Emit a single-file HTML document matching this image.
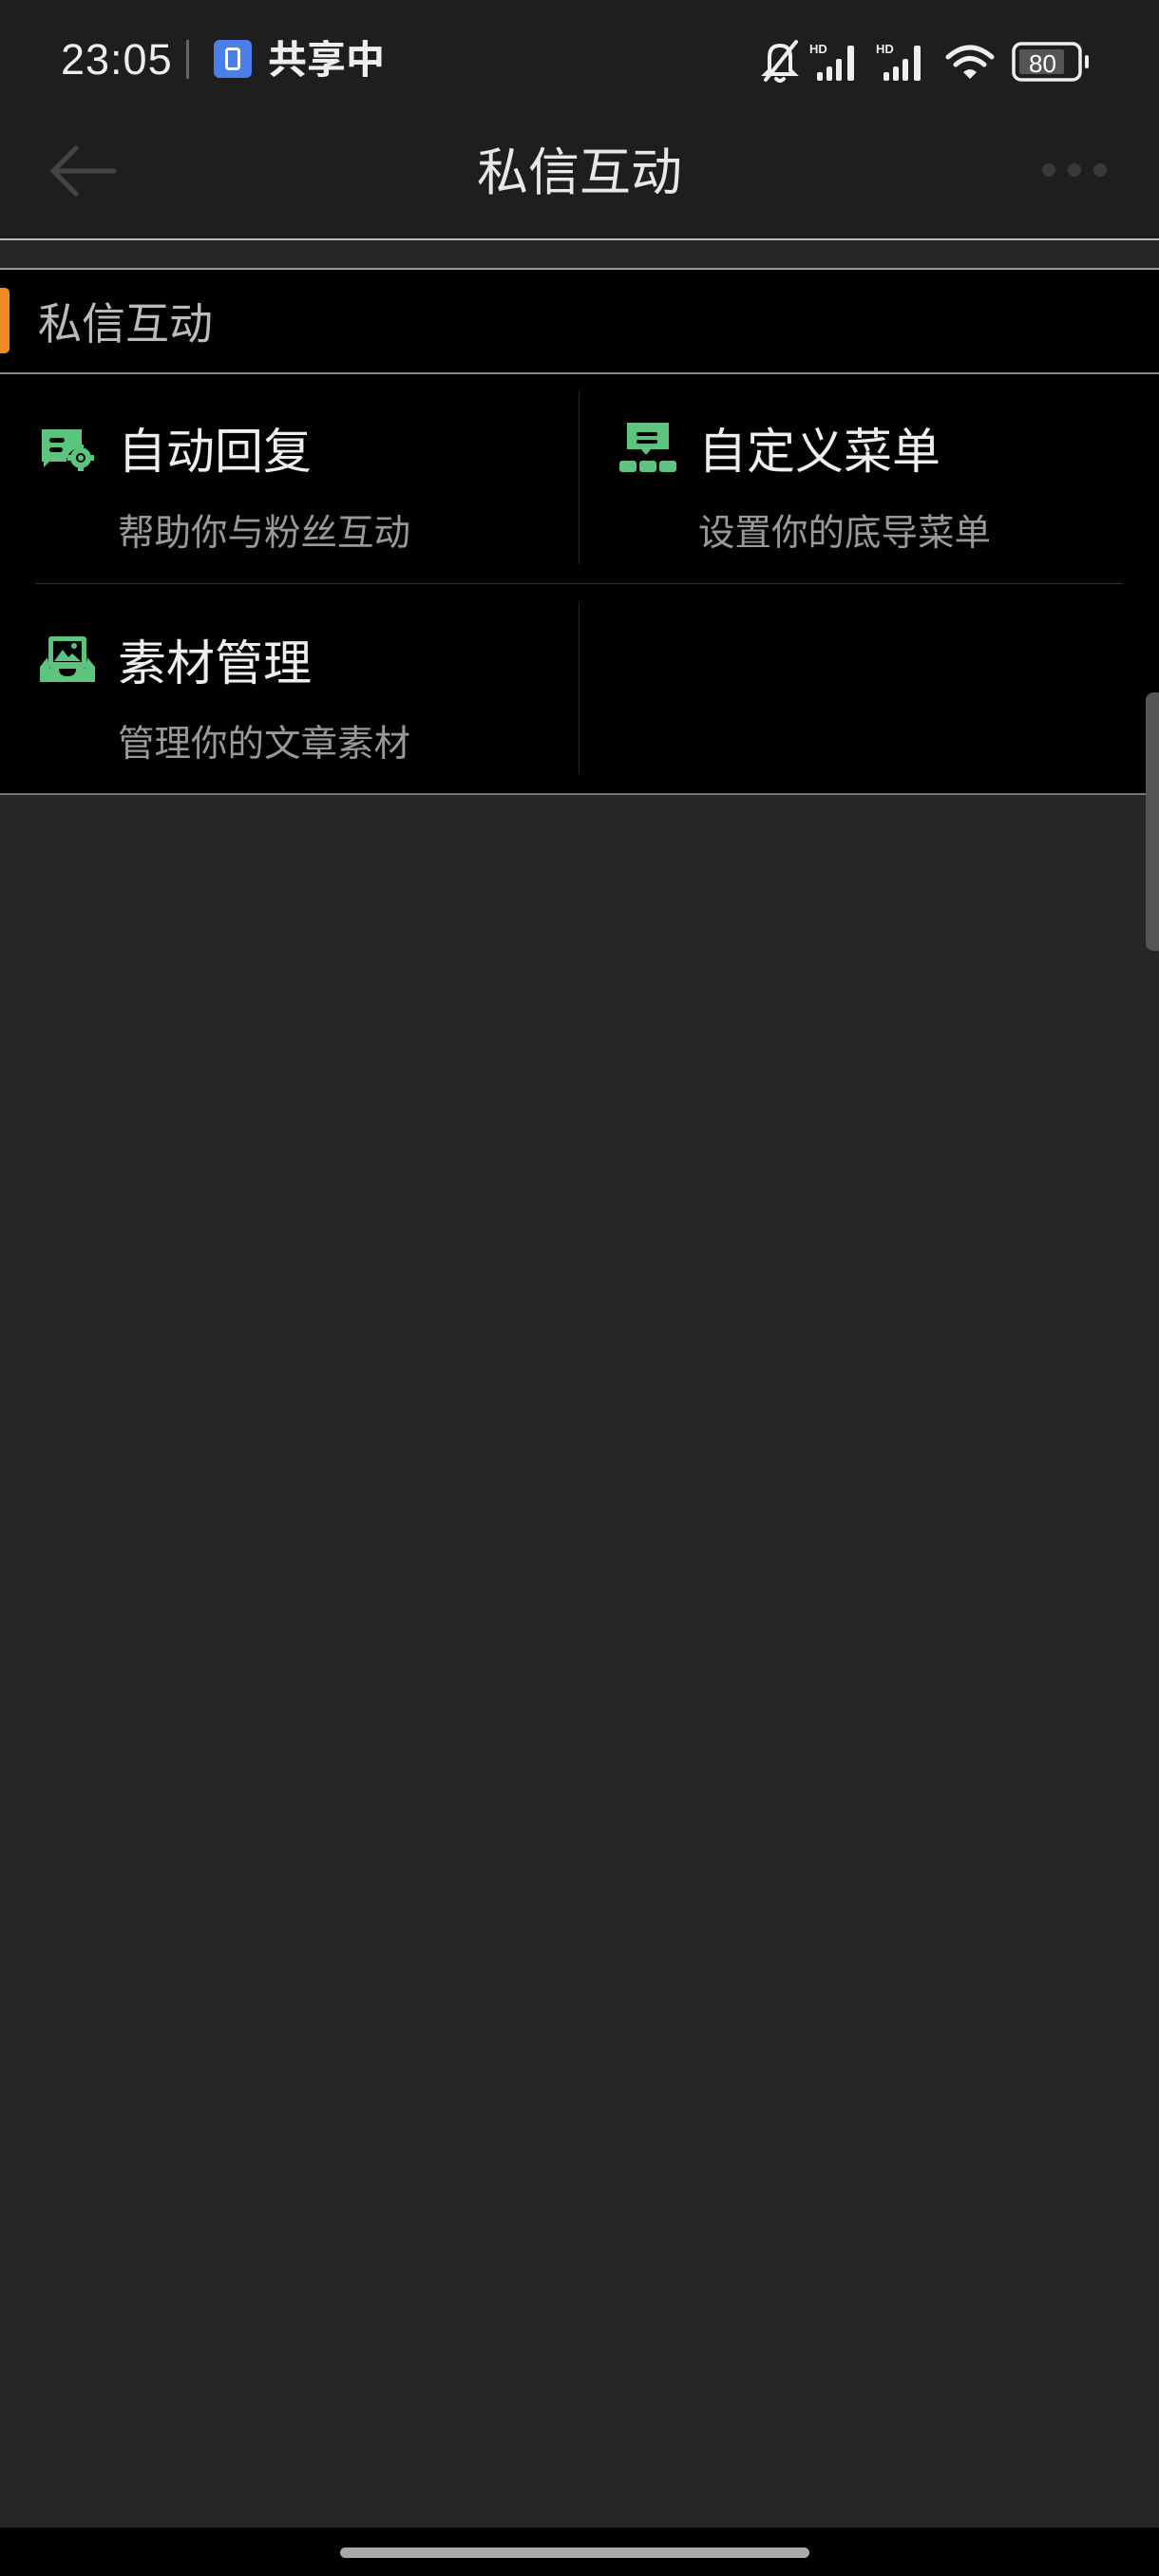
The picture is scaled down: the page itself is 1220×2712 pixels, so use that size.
<!DOCTYPE html>
<html><head><meta charset="utf-8"><style>
*{margin:0;padding:0;box-sizing:border-box}
html,body{width:1220px;height:2712px;background:#262626;overflow:hidden;font-family:"Liberation Sans","Noto Sans CJK SC",sans-serif}
.abs{position:absolute}
</style></head><body>
<div class="abs" style="left:0;top:0;width:1220px;height:251px;background:#1e1e1e"></div>
<!-- status bar -->
<div class="abs" style="left:64px;top:35px;font-size:45px;color:#eee;line-height:56px;letter-spacing:1px">23:05</div>
<div class="abs" style="left:196px;top:42px;width:3px;height:41px;background:#666"></div>
<div class="abs" style="left:225px;top:42px;width:40px;height:40px;background:#4a7ee8;border-radius:6px"></div>
<div class="abs" style="left:237px;top:50px;width:16px;height:24px;border:3px solid #fff;border-radius:4px"></div>
<div class="abs" style="left:282px;top:35px;font-size:41px;font-weight:bold;color:#eee;line-height:56px">共享中</div>
<svg class="abs" style="left:790px;top:38px" width="370" height="54" viewBox="790 38 370 54">
 <g fill="none" stroke="#eee" stroke-width="4" stroke-linecap="round">
  <path d="M810 74 L810 60 Q810 48 821 48 Q832 48 832 60 L832 74 L836 78 L806 78 Z"/>
  <path d="M806 84 L838 44"/>
  <path d="M817 83 Q821 87 825 83"/>
 </g>
 <g fill="#eee" font-family="Liberation Sans" font-weight="bold" font-size="13"><text x="852" y="56">HD</text><text x="922" y="56">HD</text></g>
 <g fill="#eee">
  <rect x="860" y="76" width="6" height="9" rx="2"/><rect x="870" y="70" width="6" height="15" rx="2"/><rect x="880" y="62" width="6" height="23" rx="2"/><rect x="892" y="48" width="7" height="37" rx="2"/>
  <rect x="930" y="76" width="6" height="9" rx="2"/><rect x="940" y="70" width="6" height="15" rx="2"/><rect x="950" y="62" width="6" height="23" rx="2"/><rect x="962" y="48" width="7" height="37" rx="2"/>
 </g>
 <g fill="none" stroke="#eee" stroke-width="5" stroke-linecap="round">
  <path d="M998 60 Q1021 40 1044 60"/><path d="M1006 68 Q1021 55 1036 68"/>
 </g>
 <path d="M1014 76 Q1021 70 1028 76 L1021 83 Z" fill="#eee"/>
 <rect x="1067" y="46" width="70" height="38" rx="8" fill="none" stroke="#eee" stroke-width="3.5"/>
 <rect x="1073" y="52" width="47" height="26" rx="2" fill="#555"/>
 <rect x="1142" y="58" width="4" height="14" rx="2" fill="#eee"/>
 <text x="1083" y="76" fill="#fff" font-family="Liberation Sans" font-size="26">80</text>
</svg>
<!-- nav -->
<svg class="abs" style="left:50px;top:150px" width="75" height="60"><path d="M70 30 L8 30 M30 6 L6 30 L30 54" fill="none" stroke="#444" stroke-width="5" stroke-linecap="round"/></svg>
<div class="abs" style="left:0;top:149px;width:1220px;text-align:center;font-size:54px;color:#e8e8e8;line-height:66px">私信互动</div>
<div class="abs" style="left:1097px;top:172px;width:14px;height:14px;border-radius:7px;background:#3a3a3a"></div>
<div class="abs" style="left:1124px;top:172px;width:14px;height:14px;border-radius:7px;background:#3a3a3a"></div>
<div class="abs" style="left:1151px;top:172px;width:14px;height:14px;border-radius:7px;background:#3a3a3a"></div>
<div class="abs" style="left:0;top:251px;width:1220px;height:2px;background:#bbb"></div>
<div class="abs" style="left:0;top:282px;width:1220px;height:2px;background:#999"></div>
<!-- section -->
<div class="abs" style="left:0;top:284px;width:1220px;height:552px;background:#000"></div>
<div class="abs" style="left:0;top:303px;width:10px;height:69px;background:#f08a24;border-radius:0 5px 5px 0"></div>
<div class="abs" style="left:40px;top:312px;font-size:46px;color:#bbb;line-height:58px">私信互动</div>
<div class="abs" style="left:0;top:392px;width:1220px;height:2px;background:#888"></div>
<div class="abs" style="left:609px;top:412px;width:1px;height:182px;background:#2a2a2a"></div>
<div class="abs" style="left:38px;top:614px;width:1144px;height:1px;background:#333"></div>
<div class="abs" style="left:609px;top:635px;width:1px;height:180px;background:#2a2a2a"></div>
<div class="abs" style="left:0;top:835px;width:1220px;height:2px;background:#777"></div>
<!-- icons -->
<svg class="abs" style="left:42px;top:450px" width="58" height="46" viewBox="0 0 58 46">
 <path d="M2 2 H44 V22 A14 14 0 0 0 28 36 H10 L4 42 V36 H2 Z" fill="#5cc47e"/>
 <rect x="10" y="11" width="16" height="5" rx="2.5" fill="#000"/><rect x="10" y="21" width="14" height="5" rx="2.5" fill="#000"/>
 <circle cx="43" cy="32" r="11" fill="#5cc47e"/>
 <g fill="#5cc47e"><rect x="40" y="18" width="6" height="5"/><rect x="40" y="41" width="6" height="5"/><rect x="29" y="29" width="5" height="6"/><rect x="52" y="29" width="5" height="6"/></g>
 <circle cx="43" cy="32" r="5" fill="#000"/><circle cx="43" cy="32" r="3" fill="#5cc47e"/>
</svg>
<svg class="abs" style="left:652px;top:445px" width="60" height="54" viewBox="0 0 60 54">
 <path d="M8 0 H52 V28 H33 L28 34 L23 28 H8 Z" fill="#5cc47e"/>
 <rect x="18" y="10" width="22" height="4" rx="2" fill="#000"/><rect x="18" y="18" width="22" height="4" rx="2" fill="#000"/>
 <rect x="0" y="40" width="18" height="12" rx="3" fill="#5cc47e"/><rect x="21" y="40" width="18" height="12" rx="3" fill="#5cc47e"/><rect x="42" y="40" width="18" height="12" rx="3" fill="#5cc47e"/>
</svg>
<svg class="abs" style="left:40px;top:668px" width="62" height="52" viewBox="0 0 62 52">
 <rect x="11" y="2" width="40" height="34" rx="3" fill="#5cc47e"/>
 <rect x="16" y="7" width="30" height="22" fill="#000"/>
 <path d="M17 28 L26 16 L32 24 L36 20 L45 28 Z" fill="#5cc47e"/><circle cx="38" cy="12" r="3" fill="#5cc47e"/>
 <path d="M2 34 L10 24 L12 36 H22 Q22 44 31 44 Q40 44 40 36 H50 L52 24 L60 34 V50 H2 Z" fill="#5cc47e"/>
</svg>
<!-- text -->
<div class="abs" style="left:124px;top:444px;font-size:51px;color:#eee;line-height:64px">自动回复</div>
<div class="abs" style="left:124px;top:537px;font-size:38.5px;color:#999;line-height:50px">帮助你与粉丝互动</div>
<div class="abs" style="left:735px;top:444px;font-size:51px;color:#eee;line-height:64px">自定义菜单</div>
<div class="abs" style="left:735px;top:537px;font-size:38.5px;color:#999;line-height:50px">设置你的底导菜单</div>
<div class="abs" style="left:124px;top:667px;font-size:51px;color:#eee;line-height:64px">素材管理</div>
<div class="abs" style="left:124px;top:759px;font-size:38.5px;color:#999;line-height:50px">管理你的文章素材</div>
<!-- scrollbar -->
<div class="abs" style="left:1206px;top:729px;width:16px;height:272px;background:#555;border-radius:8px 0 0 8px"></div>
<!-- bottom bar -->
<div class="abs" style="left:0;top:2661px;width:1220px;height:51px;background:#000"></div>
<div class="abs" style="left:358px;top:2682px;width:494px;height:11px;border-radius:6px;background:#aaa"></div>
</body></html>
